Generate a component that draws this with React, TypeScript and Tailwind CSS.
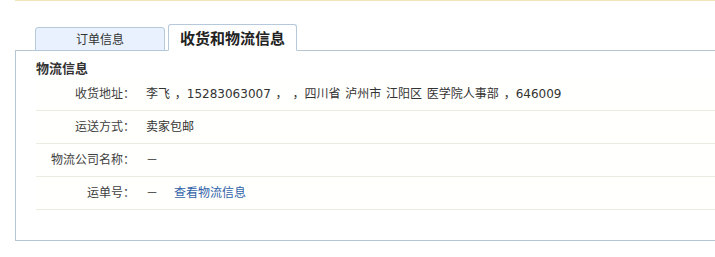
import type { ReactNode } from 'react'

const rows: { label: string; value: ReactNode }[] = [
  {
    label: '收货地址：',
    value: '李飞 ，15283063007 ， ，四川省 泸州市 江阳区 医学院人事部 ，646009',
  },
  { label: '运送方式：', value: '卖家包邮' },
  { label: '物流公司名称：', value: '－' },
  {
    label: '运单号：',
    value: (
      <>
        <span>－</span>
        <a href="#" className="ml-[16px] text-[#3062a8] no-underline">
          查看物流信息
        </a>
      </>
    ),
  },
]

function InfoRow({ label, value }: { label: string; value: ReactNode }) {
  return (
    <div className="flex h-[33px] items-center border-b border-[#ecebdf] bg-[#fffffd]">
      <div className="w-[99px] shrink-0 text-right text-[#404040]">{label}</div>
      <div className="flex items-center whitespace-nowrap pl-[11px] text-[#333] [word-spacing:1px]">
        {value}
      </div>
    </div>
  )
}

export default function App() {
  return (
    <div className="h-[257px] w-[715px] overflow-hidden bg-white font-['DejaVu_Sans','Noto_Sans_CJK_SC',sans-serif] text-[12px] leading-[18px]">
      <div className="ml-[15px] h-px bg-[#f0e6b8]" />

      <div className="ml-[15px] mt-[23px] w-[720px]">
        <div className="relative z-10 mb-[-1px] flex h-[27px] items-end gap-[3px] pl-[20px]">
          <div className="flex h-[24px] w-[130px] items-center justify-center rounded-t-[3px] border border-[#b5c8dc] bg-[#e8f1fd] pt-px text-[12px] text-[#333]">
            订单信息
          </div>
          <div className="flex h-[27px] w-[129px] items-center justify-center rounded-t-[3px] border border-b-white border-[#b5c8dc] bg-white pt-[2px] text-[15px] font-bold text-[#222]">
            收货和物流信息
          </div>
        </div>

        <div className="h-[191px] border border-[#b6c6d3] bg-white pl-[20px]">
          <div className="h-[27px] pt-[9px] text-[13px] font-bold text-[#333]">
            物流信息
          </div>
          {rows.map((r) => (
            <InfoRow key={r.label} label={r.label} value={r.value} />
          ))}
        </div>
      </div>
    </div>
  )
}
